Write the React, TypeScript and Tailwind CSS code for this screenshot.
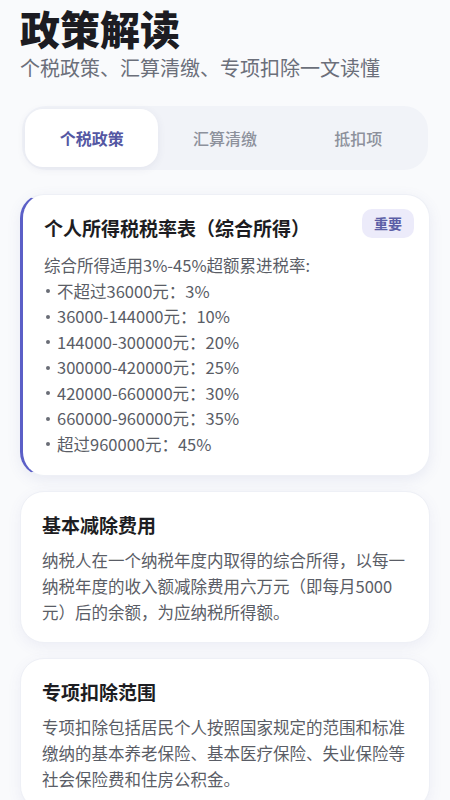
import * as React from "react"

const tabs = ["个税政策", "汇算清缴", "抵扣项"]

const rates = [
	"不超过36000元：3%",
	"36000-144000元：10%",
	"144000-300000元：20%",
	"300000-420000元：25%",
	"420000-660000元：30%",
	"660000-960000元：35%",
	"超过960000元：45%",
]

function Tabs() {
	const [active, setActive] = React.useState(0)

	return (
		<div className="mx-[2px] mt-[24px] flex rounded-[24px] bg-[#f1f3f8] p-[3px]">
			{tabs.map((tab, i) => (
				<button
					key={tab}
					onClick={() => setActive(i)}
					className={
						i === active
							? "flex h-[58px] flex-1 items-center justify-center rounded-[18px] bg-white text-[16px] font-semibold text-[#5457a3] shadow-[0_2px_8px_rgba(60,60,110,0.08)]"
							: "flex h-[58px] flex-1 items-center justify-center rounded-[18px] text-[16px] font-medium text-[#8d919c]"
					}
				>
					{tab}
				</button>
			))}
		</div>
	)
}

function Card({
	title,
	children,
	accent,
	badge,
}: {
	title: string
	children: React.ReactNode
	accent?: boolean
	badge?: string
}) {
	return (
		<div
			className={
				accent
					? "relative rounded-[24px] border border-l-[3px] border-[#eef0f6] border-l-[#5b5fc7] bg-white pb-[18px] pl-[21px] pr-[23px] pt-[19px] shadow-[0_4px_14px_rgba(91,95,170,0.10)]"
					: "relative rounded-[24px] border border-[#eef0f6] bg-white pb-[17px] pl-[21px] pr-[23px] pt-[19px] shadow-[0_4px_14px_rgba(91,95,170,0.08)]"
			}
		>
			{badge && (
				<span className="absolute right-[15px] top-[14px] flex h-[29px] items-center rounded-[10px] bg-[#ecebfa] px-3 text-[14px] font-semibold text-[#5b5ea6]">
					{badge}
				</span>
			)}
			<h2 className="text-[19px] font-bold leading-[28px] text-[#1d1d22]">
				{title}
			</h2>
			{children}
		</div>
	)
}

export default function App() {
	return (
		<div
			className="min-h-screen bg-[#f9fafc] px-5 pb-10"
			style={{ fontFamily: '"Noto Sans CJK SC", "Noto Sans", sans-serif' }}
		>
			<h1 className="pt-[2px] text-[40px] font-black leading-[52px] text-[#1c1c22]">
				政策解读
			</h1>
			<p className="text-[20px] leading-[28px] text-[#6b6f7a]">
				个税政策、汇算清缴、专项扣除一文读懂
			</p>

			<Tabs />

			<div className="mt-[24px] flex flex-col gap-[15px]">
				<Card title="个人所得税税率表（综合所得）" accent badge="重要">
					<div className="mt-[11px] text-[16.5px] leading-[25.5px] text-[#5a5d66]">
						<div>综合所得适用3%-45%超额累进税率:</div>
						{rates.map((r) => (
							<div key={r} className="flex items-center">
								<span className="ml-[2px] mr-[7px] inline-block h-[4px] w-[4px] rounded-full bg-[#6a6d76]" />
								{r}
							</div>
						))}
					</div>
				</Card>

				<Card title="基本减除费用">
					<p className="mt-[8px] text-[16.5px] leading-[26px] text-[#5a5d66]">
						纳税人在一个纳税年度内取得的综合所得，以每一纳税年度的收入额减除费用六万元（即每月5000元）后的余额，为应纳税所得额。
					</p>
				</Card>

				<Card title="专项扣除范围">
					<p className="mt-[8px] text-[16.5px] leading-[26px] text-[#5a5d66]">
						专项扣除包括居民个人按照国家规定的范围和标准缴纳的基本养老保险、基本医疗保险、失业保险等社会保险费和住房公积金。
					</p>
				</Card>
			</div>
		</div>
	)
}
